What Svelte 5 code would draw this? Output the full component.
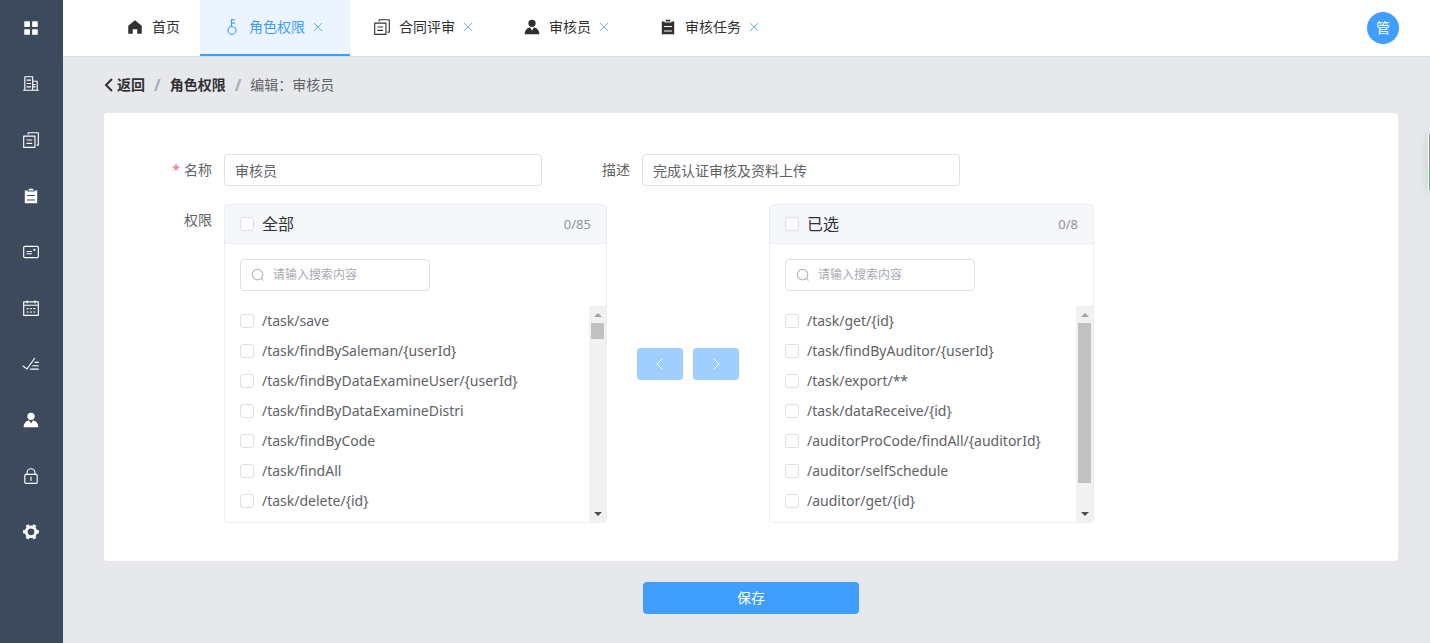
<script>
    const icons = {
        menu: 'M160 128h256a32 32 0 0 1 32 32v256a32 32 0 0 1-32 32H160a32 32 0 0 1-32-32V160a32 32 0 0 1 32-32m448 0h256a32 32 0 0 1 32 32v256a32 32 0 0 1-32 32H608a32 32 0 0 1-32-32V160a32 32 0 0 1 32-32M160 576h256a32 32 0 0 1 32 32v256a32 32 0 0 1-32 32H160a32 32 0 0 1-32-32V608a32 32 0 0 1 32-32m448 0h256a32 32 0 0 1 32 32v256a32 32 0 0 1-32 32H608a32 32 0 0 1-32-32V608a32 32 0 0 1 32-32',
        office: 'M192 128v704h384V128zm-32-64h448a32 32 0 0 1 32 32v768a32 32 0 0 1-32 32H160a32 32 0 0 1-32-32V96a32 32 0 0 1 32-32M256 256h256v64H256zm0 192h256v64H256zm0 192h256v64H256zm384-128h128v64H640zm0 128h128v64H640zM64 832h896v64H64zM640 384v448h192V384zm-32-64h256a32 32 0 0 1 32 32v512a32 32 0 0 1-32 32H608a32 32 0 0 1-32-32V352a32 32 0 0 1 32-32',
        copy: 'M128 320v576h576V320zm-32-64h640a32 32 0 0 1 32 32v640a32 32 0 0 1-32 32H96a32 32 0 0 1-32-32V288a32 32 0 0 1 32-32M960 96v704a32 32 0 0 1-32 32h-96v-64h64V128H384v64h-64V96a32 32 0 0 1 32-32h576a32 32 0 0 1 32 32M256 672h320v64H256zm0-192h320v64H256z',
        list: 'M704 192h160v736H160V192h160v64h384zM288 512h448v-64H288zm0 256h448v-64H288zm96-576V96h256v96z',
        postcard: 'M160 224a32 32 0 0 0-32 32v512a32 32 0 0 0 32 32h704a32 32 0 0 0 32-32V256a32 32 0 0 0-32-32zm0-64h704a96 96 0 0 1 96 96v512a96 96 0 0 1-96 96H160a96 96 0 0 1-96-96V256a96 96 0 0 1 96-96M704 320a64 64 0 1 1 0 128 64 64 0 0 1 0-128M288 448h256q32 0 32 32t-32 32H288q-32 0-32-32t32-32m0 128h256q32 0 32 32t-32 32H288q-32 0-32-32t32-32',
        calendar: 'M128 384v512h768V384zm0-64h768V192H768v32a32 32 0 1 1-64 0v-32H320v32a32 32 0 0 1-64 0v-32H128zm192-192h384V96a32 32 0 1 1 64 0v32h160a32 32 0 0 1 32 32v768a32 32 0 0 1-32 32H96a32 32 0 0 1-32-32V160a32 32 0 0 1 32-32h160V96a32 32 0 0 1 64 0zm-32 384h64a32 32 0 0 1 0 64h-64a32 32 0 0 1 0-64m0 192h64a32 32 0 1 1 0 64h-64a32 32 0 1 1 0-64m192-192h64a32 32 0 0 1 0 64h-64a32 32 0 0 1 0-64m0 192h64a32 32 0 1 1 0 64h-64a32 32 0 1 1 0-64m192-192h64a32 32 0 1 1 0 64h-64a32 32 0 1 1 0-64m0 192h64a32 32 0 1 1 0 64h-64a32 32 0 1 1 0-64',
        finished: 'M280.768 753.728 691.456 167.04a32 32 0 1 1 52.416 36.672L314.24 817.472a32 32 0 0 1-45.44 7.296l-230.4-172.8a32 32 0 0 1 38.4-51.2zM736 448a32 32 0 1 1 0-64h192a32 32 0 1 1 0 64zM608 640a32 32 0 0 1 0-64h319.936a32 32 0 1 1 0 64zM480 832a32 32 0 1 1 0-64h447.936a32 32 0 1 1 0 64z',
        avatar: 'M628.736 528.896A416 416 0 0 1 928 928H96a415.872 415.872 0 0 1 299.264-399.104L512 704zM720 304a208 208 0 1 1-416 0 208 208 0 0 1 416 0',
        lock: 'M224 448a32 32 0 0 0-32 32v384a32 32 0 0 0 32 32h576a32 32 0 0 0 32-32V480a32 32 0 0 0-32-32zm0-64h576a96 96 0 0 1 96 96v384a96 96 0 0 1-96 96H224a96 96 0 0 1-96-96V480a96 96 0 0 1 96-96M512 544a32 32 0 0 1 32 32v192a32 32 0 1 1-64 0V576a32 32 0 0 1 32-32m192-160v-64a192 192 0 1 0-384 0v64zM512 64a256 256 0 0 1 256 256v128H256V320A256 256 0 0 1 512 64',
        tools: 'M764.416 254.72a351.68 351.68 0 0 1 86.336 149.184H960v192.064H850.752a351.68 351.68 0 0 1-86.336 149.312l54.72 94.72-166.272 96-54.592-94.72a352.64 352.64 0 0 1-172.48 0L371.136 936l-166.272-96 54.72-94.72a351.68 351.68 0 0 1-86.336-149.312H64v-192h109.248a351.68 351.68 0 0 1 86.336-149.312L204.8 160l166.208-96h.192l54.656 94.592a352.64 352.64 0 0 1 172.48 0L652.8 64h.128L819.2 160l-54.72 94.72zM704 499.968a192 192 0 1 0-384 0 192 192 0 0 0 384 0',
        home: 'M512 128 128 447.936V896h255.936V640H640v256h255.936V447.936z',
        key: 'M448 456.064V96a32 32 0 0 1 32-32.064L672 64a32 32 0 0 1 0 64H512v128h160a32 32 0 0 1 0 64H512v128a256 256 0 1 1-64 8.064M512 896a192 192 0 1 0 0-384 192 192 0 0 0 0 384',
        search: 'm795.904 750.72 124.992 124.928a32 32 0 0 1-45.248 45.248L750.656 795.904a416 416 0 1 1 45.248-45.248zM480 832a352 352 0 1 0 0-704 352 352 0 0 0 0 704'
    };

    const nav = [
        { icon: 'menu', label: '首页' },
        { icon: 'office', label: '机构' },
        { icon: 'copy', label: '合同评审' },
        { icon: 'list', label: '审核任务' },
        { icon: 'postcard', label: '证书' },
        { icon: 'calendar', label: '日程' },
        { icon: 'finished', label: '评定' },
        { icon: 'avatar', label: '审核员' },
        { icon: 'lock', label: '角色权限' },
        { icon: 'tools', label: '设置' }
    ];

    let tabs = [
        { id: 'home', icon: 'home', title: '首页', closable: false },
        { id: 'role', icon: 'key', title: '角色权限', closable: true },
        { id: 'contract', icon: 'copy', title: '合同评审', closable: true },
        { id: 'auditor', icon: 'avatar', title: '审核员', closable: true },
        { id: 'task', icon: 'list', title: '审核任务', closable: true }
    ];
    let active = 'role';

    let name = '审核员';
    let description = '完成认证审核及资料上传';

    let panels = [
        {
            id: 'all',
            title: '全部',
            total: 85,
            query: '',
            checked: [],
            thumb: 9,
            items: [
                '/task/save',
                '/task/findBySaleman/{userId}',
                '/task/findByDataExamineUser/{userId}',
                '/task/findByDataExamineDistri',
                '/task/findByCode',
                '/task/findAll',
                '/task/delete/{id}'
            ]
        },
        {
            id: 'selected',
            title: '已选',
            total: 8,
            query: '',
            checked: [],
            thumb: 88,
            items: [
                '/task/get/{id}',
                '/task/findByAuditor/{userId}',
                '/task/export/**',
                '/task/dataReceive/{id}',
                '/auditorProCode/findAll/{auditorId}',
                '/auditor/selfSchedule',
                '/auditor/get/{id}'
            ]
        }
    ];

    function closeTab(id) {
        tabs = tabs.filter(t => t.id !== id);
        if (active === id) active = 'home';
    }

    function toggleAll(index, on) {
        panels[index].checked = on ? [...panels[index].items] : [];
    }

    function move(from, to) {
        const picked = panels[from].checked;
        panels[from].items = panels[from].items.filter(i => !picked.includes(i));
        panels[from].total -= picked.length;
        panels[from].checked = [];
        panels[to].items = [...picked, ...panels[to].items];
        panels[to].total += picked.length;
    }
</script>

{#snippet icon(key)}
    <svg class="icon" viewBox="0 0 1024 1024" aria-hidden="true"><path d={icons[key]} /></svg>
{/snippet}

{#snippet transferPanel(panel, index)}
    <section class="panel {panel.id}">
        <header class="panel-head">
            <label>
                <input
                    type="checkbox"
                    checked={panel.checked.length > 0 && panel.checked.length === panel.items.length}
                    on:change={e => toggleAll(index, e.target.checked)}
                />
                <span class="panel-title">{panel.title}</span>
            </label>
            <span class="count">{panel.checked.length}/{panel.total}</span>
        </header>
        <div class="filter">
            {@render icon('search')}
            <input type="text" aria-label="搜索" placeholder="请输入搜索内容" bind:value={panels[index].query} />
        </div>
        <div class="panel-body">
            <ul>
                {#each panel.items.filter(i => i.includes(panel.query)) as item (item)}
                    <li>
                        <label>
                            <input type="checkbox" value={item} bind:group={panels[index].checked} />
                            <span>{item}</span>
                        </label>
                    </li>
                {/each}
            </ul>
            <div class="scrollbar" aria-hidden="true">
                <span class="arrow up"></span>
                <div class="track"><div class="thumb" style="height: {panel.thumb}%"></div></div>
                <span class="arrow down"></span>
            </div>
        </div>
    </section>
{/snippet}

<div class="layout">
    <nav class="sidebar">
        {#each nav as item}
            <a href="#{item.icon}" aria-label={item.label}>{@render icon(item.icon)}</a>
        {/each}
    </nav>

    <div class="content">
        <header class="topbar">
            <div class="tabs">
                {#each tabs as tab (tab.id)}
                    <div class="tab" class:active={tab.id === active}>
                        <button type="button" class="tab-name" on:click={() => (active = tab.id)}>
                            {@render icon(tab.icon)}
                            <span>{tab.title}</span>
                        </button>
                        {#if tab.closable}
                            <button type="button" class="close" aria-label="关闭" on:click={() => closeTab(tab.id)}>
                                <svg viewBox="0 0 10 10"><path d="M1 1l8 8M9 1l-8 8" /></svg>
                            </button>
                        {/if}
                    </div>
                {/each}
            </div>
            <button type="button" class="user">管</button>
        </header>

        <main>
            <nav class="breadcrumb">
                <a href="#back">
                    <svg viewBox="0 0 9 14"><path d="M8 1L2 7l6 6" /></svg>
                    返回
                </a>
                <span class="sep">/</span>
                <a href="#role">角色权限</a>
                <span class="sep">/</span>
                <span>编辑：审核员</span>
            </nav>

            <form id="role-form" class="card" on:submit|preventDefault>
                <div class="row fields">
                    <label class="label required" for="name">名称</label>
                    <input id="name" class="text" type="text" bind:value={name} required />
                    <label class="label second" for="description">描述</label>
                    <input id="description" class="text" type="text" bind:value={description} />
                </div>
                <div class="row">
                    <span class="label">权限</span>
                    <div class="transfer">
                        {@render transferPanel(panels[0], 0)}
                        <div class="moves">
                            <button type="button" aria-label="移到左侧" disabled={!panels[1].checked.length} on:click={() => move(1, 0)}>
                                <svg viewBox="0 0 14 14"><path d="M9 2L4 7l5 5" /></svg>
                            </button>
                            <button type="button" aria-label="移到右侧" disabled={!panels[0].checked.length} on:click={() => move(0, 1)}>
                                <svg viewBox="0 0 14 14"><path d="M5 2l5 5-5 5" /></svg>
                            </button>
                        </div>
                        {@render transferPanel(panels[1], 1)}
                    </div>
                </div>
            </form>

            <button type="submit" form="role-form" class="save">保存</button>
        </main>
    </div>

    <div class="side-widget"></div>
</div>

<style>
    :global(body) {
        font-family: 'Noto Sans', 'Noto Sans CJK SC', sans-serif;
        font-size: 14px;
        line-height: 20px;
        color: #606266;
        background: #e6e8eb;
    }

    .layout {
        display: flex;
        min-height: 100vh;
    }

    button, input {
        font: inherit;
        color: inherit;
        box-sizing: border-box;
        margin: 0;
    }

    button {
        border: none;
        padding: 0;
        background: none;
        cursor: pointer;
    }

    a {
        color: inherit;
        text-decoration: none;
    }

    .icon {
        width: 18px;
        height: 18px;
        fill: currentColor;
        flex: none;
    }

    .sidebar {
        box-sizing: border-box;
        width: 63px;
        padding-right: 1px;
        flex: none;
        background: #3d4a5d;
        color: #fff;
    }

    .sidebar a {
        display: flex;
        align-items: center;
        justify-content: center;
        height: 56px;
    }

    .content {
        flex: 1;
        min-width: 0;
    }

    .topbar {
        display: flex;
        align-items: center;
        justify-content: space-between;
        height: 56px;
        padding: 0 31px 0 40px;
        background: #fff;
        border-bottom: 1px solid #dcdfe6;
    }

    .tabs {
        display: flex;
        height: 100%;
    }

    .tab {
        display: flex;
        box-sizing: border-box;
        height: 56px;
        padding: 0 20px;
        color: #303133;
        border-bottom: 2px solid transparent;
    }

    .tab.active {
        color: #409eff;
        background: #ecf5ff;
        border-bottom-color: #409eff;
    }

    .tab-name {
        display: flex;
        align-items: center;
        gap: 8px;
        padding-left: 3px;
    }

    .close {
        width: 25px;
        color: #409eff;
    }

    .close svg {
        width: 10px;
        height: 10px;
    }

    .close path {
        fill: none;
        stroke: currentColor;
        stroke-width: 0.8;
    }

    .user {
        width: 32px;
        height: 32px;
        border-radius: 50%;
        color: #fff;
        background: #409eff;
    }

    main {
        padding: 0 32px 29px 41px;
    }

    .breadcrumb {
        display: flex;
        align-items: center;
        height: 56px;
    }

    .breadcrumb a {
        display: flex;
        align-items: center;
        gap: 4px;
        font-weight: 700;
        color: #303133;
    }

    .breadcrumb svg {
        width: 9px;
        height: 14px;
    }

    .breadcrumb path {
        fill: none;
        stroke: currentColor;
        stroke-width: 2;
    }

    .sep {
        margin: 0 9px;
        font-size: 16px;
        font-weight: 700;
        color: #a8abb2;
    }

    .card {
        padding: 41px 40px 38px 0;
        background: #fff;
        border-radius: 4px;
    }

    .row {
        display: flex;
    }

    .fields {
        max-width: 856px;
        margin-bottom: 18px;
    }

    .label {
        flex: none;
        box-sizing: border-box;
        width: 120px;
        padding-right: 12px;
        line-height: 32px;
        text-align: right;
    }

    .label.second {
        width: 100px;
    }

    .required::before {
        content: '*';
        margin-right: 4px;
        color: #f56c6c;
    }

    .text, .filter {
        height: 32px;
        border: 1px solid #dcdfe6;
        border-radius: 4px;
        background: #fff;
    }

    .text {
        flex: 1;
        min-width: 0;
        padding: 0 10px;
    }

    .transfer {
        display: flex;
        align-items: center;
    }

    .panel {
        box-sizing: border-box;
        width: 325px;
        border: 1px solid #ebeef5;
        border-radius: 4px;
        overflow: hidden;
    }

    .panel.all {
        width: 383px;
    }

    .panel label {
        display: flex;
        align-items: center;
        gap: 8px;
    }

    .panel-head {
        display: flex;
        align-items: center;
        justify-content: space-between;
        height: 38px;
        padding: 0 15px;
        background: #f5f7fa;
        border-bottom: 1px solid #ebeef5;
    }

    .panel-title {
        font-size: 16px;
        color: #303133;
    }

    .count {
        font-size: 13px;
        color: #909399;
    }

    input[type='checkbox'] {
        appearance: none;
        width: 14px;
        height: 14px;
        border: 1px solid #dcdfe6;
        border-radius: 3px;
        background: #fff;
    }

    input[type='checkbox']:checked {
        background: #409eff;
        border-color: #409eff;
    }

    .filter {
        display: flex;
        align-items: center;
        gap: 8px;
        box-sizing: border-box;
        width: 190px;
        margin: 15px;
        padding: 0 10px;
        font-size: 12px;
        color: #a8abb2;
    }

    .filter .icon {
        width: 14px;
        height: 14px;
    }

    .filter input {
        flex: 1;
        min-width: 0;
        padding: 0;
        border: none;
        outline: none;
        color: #606266;
        background: none;
    }

    .filter input::placeholder {
        color: #a8abb2;
    }

    .panel-body {
        display: flex;
        height: 216px;
    }

    ul {
        flex: 1;
        margin: 0;
        padding: 0 0 0 15px;
        list-style: none;
        overflow: hidden;
    }

    li label {
        height: 30px;
    }

    .scrollbar {
        display: flex;
        flex-direction: column;
        width: 17px;
        background: #f1f1f1;
    }

    .arrow {
        display: flex;
        align-items: center;
        justify-content: center;
        height: 17px;
    }

    .arrow::before {
        content: '';
        border: 4px solid transparent;
        border-top-width: 0;
        border-bottom-color: #a3a3a3;
    }

    .arrow.down::before {
        border-top: 4px solid #505050;
        border-bottom-width: 0;
    }

    .track {
        flex: 1;
        padding: 0 2px;
    }

    .thumb {
        background: #c1c1c1;
    }

    .moves {
        display: flex;
        gap: 10px;
        padding: 0 30px;
    }

    .moves button {
        width: 46px;
        height: 32px;
        border-radius: 4px;
        background: #409eff;
    }

    .moves button:disabled {
        background: #a0cfff;
        cursor: not-allowed;
    }

    .moves svg {
        display: block;
        width: 14px;
        height: 14px;
        margin: 0 auto;
    }

    .moves path {
        fill: none;
        stroke: #fff;
    }

    .save {
        display: block;
        width: 216px;
        height: 32px;
        margin: 21px auto 0;
        border-radius: 4px;
        color: #fff;
        background: #409eff;
    }

    /* edge of the docked helper, tucked against the right side */
    .side-widget {
        position: fixed;
        top: 134px;
        right: 0;
        width: 1px;
        height: 56px;
        border-left: 1px solid #fff;
        background: linear-gradient(#8c8f90 56%, #3fc168 56%);
        box-shadow: 0 2px 8px rgba(0, 0, 0, 0.3);
    }
</style>
